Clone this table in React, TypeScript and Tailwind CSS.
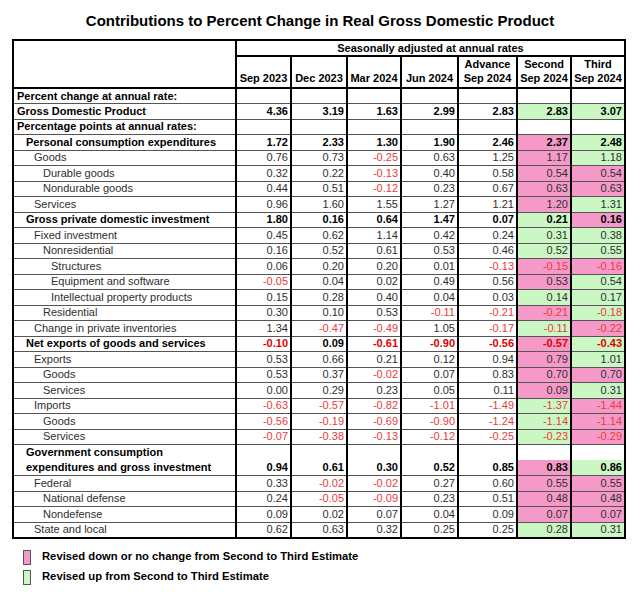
import React from 'react';

type Fill = 'p' | 'g' | '';

type Row = {
  label: string;
  level: number;
  bold?: boolean;
  values?: string[];
  fills?: [Fill, Fill];
  noLine?: boolean;
};

const rows: Row[] = [
  { label: 'Percent change at annual rate:', level: 0, bold: true },
  { label: 'Gross Domestic Product', level: 0, bold: true, values: ['4.36', '3.19', '1.63', '2.99', '2.83', '2.83', '3.07'], fills: ['g', 'g'] },
  { label: 'Percentage points at annual rates:', level: 0, bold: true },
  { label: 'Personal consumption expenditures', level: 1, bold: true, values: ['1.72', '2.33', '1.30', '1.90', '2.46', '2.37', '2.48'], fills: ['p', 'g'] },
  { label: 'Goods', level: 2, values: ['0.76', '0.73', '-0.25', '0.63', '1.25', '1.17', '1.18'], fills: ['p', 'g'] },
  { label: 'Durable goods', level: 3, values: ['0.32', '0.22', '-0.13', '0.40', '0.58', '0.54', '0.54'], fills: ['p', 'p'] },
  { label: 'Nondurable goods', level: 3, values: ['0.44', '0.51', '-0.12', '0.23', '0.67', '0.63', '0.63'], fills: ['p', 'p'] },
  { label: 'Services', level: 2, values: ['0.96', '1.60', '1.55', '1.27', '1.21', '1.20', '1.31'], fills: ['p', 'g'] },
  { label: 'Gross private domestic investment', level: 1, bold: true, values: ['1.80', '0.16', '0.64', '1.47', '0.07', '0.21', '0.16'], fills: ['g', 'p'] },
  { label: 'Fixed investment', level: 2, values: ['0.45', '0.62', '1.14', '0.42', '0.24', '0.31', '0.38'], fills: ['g', 'g'] },
  { label: 'Nonresidential', level: 3, values: ['0.16', '0.52', '0.61', '0.53', '0.46', '0.52', '0.55'], fills: ['g', 'g'] },
  { label: 'Structures', level: 4, values: ['0.06', '0.20', '0.20', '0.01', '-0.13', '-0.15', '-0.16'], fills: ['p', 'p'] },
  { label: 'Equipment and software', level: 4, values: ['-0.05', '0.04', '0.02', '0.49', '0.56', '0.53', '0.54'], fills: ['p', 'g'] },
  { label: 'Intellectual property products', level: 4, values: ['0.15', '0.28', '0.40', '0.04', '0.03', '0.14', '0.17'], fills: ['g', 'g'] },
  { label: 'Residential', level: 3, values: ['0.30', '0.10', '0.53', '-0.11', '-0.21', '-0.21', '-0.18'], fills: ['p', 'g'] },
  { label: 'Change in private inventories', level: 2, values: ['1.34', '-0.47', '-0.49', '1.05', '-0.17', '-0.11', '-0.22'], fills: ['g', 'p'] },
  { label: 'Net exports of goods and services', level: 1, bold: true, values: ['-0.10', '0.09', '-0.61', '-0.90', '-0.56', '-0.57', '-0.43'], fills: ['p', 'g'] },
  { label: 'Exports', level: 2, values: ['0.53', '0.66', '0.21', '0.12', '0.94', '0.79', '1.01'], fills: ['p', 'g'] },
  { label: 'Goods', level: 3, values: ['0.53', '0.37', '-0.02', '0.07', '0.83', '0.70', '0.70'], fills: ['p', 'p'] },
  { label: 'Services', level: 3, values: ['0.00', '0.29', '0.23', '0.05', '0.11', '0.09', '0.31'], fills: ['p', 'g'] },
  { label: 'Imports', level: 2, values: ['-0.63', '-0.57', '-0.82', '-1.01', '-1.49', '-1.37', '-1.44'], fills: ['g', 'p'] },
  { label: 'Goods', level: 3, values: ['-0.56', '-0.19', '-0.69', '-0.90', '-1.24', '-1.14', '-1.14'], fills: ['g', 'p'] },
  { label: 'Services', level: 3, values: ['-0.07', '-0.38', '-0.13', '-0.12', '-0.25', '-0.23', '-0.29'], fills: ['g', 'p'] },
  { label: 'Government consumption', level: 1, bold: true, noLine: true },
  { label: 'expenditures and gross investment', level: 1, bold: true, values: ['0.94', '0.61', '0.30', '0.52', '0.85', '0.83', '0.86'], fills: ['p', 'g'] },
  { label: 'Federal', level: 2, values: ['0.33', '-0.02', '-0.02', '0.27', '0.60', '0.55', '0.55'], fills: ['p', 'p'] },
  { label: 'National defense', level: 3, values: ['0.24', '-0.05', '-0.09', '0.23', '0.51', '0.48', '0.48'], fills: ['p', 'p'] },
  { label: 'Nondefense', level: 3, values: ['0.09', '0.02', '0.07', '0.04', '0.09', '0.07', '0.07'], fills: ['p', 'p'] },
  { label: 'State and local', level: 2, values: ['0.62', '0.63', '0.32', '0.25', '0.25', '0.28', '0.31'], fills: ['g', 'g'] },
];

const indent = ['pl-[3px]', 'pl-[12px]', 'pl-[20px]', 'pl-[29px]', 'pl-[37px]'];
const colWidths = ['w-[223px]', 'w-[55px]', 'w-[56px]', 'w-[54px]', 'w-[57px]', 'w-[59px]', 'w-[54px]', 'w-[54px]'];

const headers: [string, string][] = [
  ['', 'Sep 2023'],
  ['', 'Dec 2023'],
  ['', 'Mar 2024'],
  ['', 'Jun 2024'],
  ['Advance', 'Sep 2024'],
  ['Second', 'Sep 2024'],
  ['Third', 'Sep 2024'],
];

const fillClass = (f: Fill) => (f === 'p' ? 'bg-[#f59ac8]' : f === 'g' ? 'bg-[#cbf7c5]' : 'bg-white');

export default function App() {
  return (
    <div className="w-[640px] h-[597px] bg-white font-['Liberation_Sans',Arial,sans-serif] text-[11px] leading-none text-[#2e2e2e]">
      <h1 className="pt-[13px] pb-[11px] text-center text-[15px] font-bold text-black">
        Contributions to Percent Change in Real Gross Domestic Product
      </h1>
      <table className="ml-[12px] table-fixed border-collapse border-2 border-black">
        <colgroup>
          {colWidths.map((w, i) => (
            <col key={i} className={w} />
          ))}
        </colgroup>
        <thead>
          <tr className="h-[16px]">
            <th rowSpan={2} className="border-2 border-black" />
            <th colSpan={7} className="border-2 border-black text-center font-bold text-black">
              Seasonally adjusted at annual rates
            </th>
          </tr>
          <tr className="h-[31px]">
            {headers.map(([a, b], i) => (
              <th key={i} className="border-2 border-black px-[1px] pb-[2px] align-bottom text-center font-bold text-black leading-[14px]">
                {a && <div>{a}</div>}
                <div>{b}</div>
              </th>
            ))}
          </tr>
        </thead>
        <tbody>
          {rows.map((r, i) => (
            <tr key={i} className={`h-[15.5px] ${r.noLine ? '' : 'border-b border-[#555]'}`}>
              <td
                className={`${indent[r.level]} border-r-2 border-black whitespace-nowrap ${r.bold ? 'font-bold text-black' : ''}`}
              >
                {r.label}
              </td>
              {Array.from({ length: 7 }).map((_, j) => {
                const v = r.values?.[j];
                const fill: Fill = j >= 5 && r.fills ? r.fills[j - 5] : '';
                const neg = v?.startsWith('-');
                const color = neg ? (r.bold ? 'text-[#e00000]' : 'text-[#ea3a3a]') : r.bold ? 'text-black' : '';
                return (
                  <td
                    key={j}
                    className={`border-r-2 border-black pr-[2px] text-right ${fillClass(fill)} ${color} ${r.bold ? 'font-bold' : ''}`}
                  >
                    {v ?? ''}
                  </td>
                );
              })}
            </tr>
          ))}
        </tbody>
      </table>
      <div className="ml-[23px] mt-[11px] flex flex-col gap-[5px] font-bold text-black text-[11.25px]">
        <div className="flex items-center gap-[11px]">
          <span className="w-[8px] h-[15px] border border-[#555] bg-[#f59ac8]" />
          <span>Revised down or no change from Second to Third Estimate</span>
        </div>
        <div className="flex items-center gap-[11px]">
          <span className="w-[8px] h-[15px] border border-[#555] bg-[#cbf7c5]" />
          <span>Revised up from Second to Third Estimate</span>
        </div>
      </div>
    </div>
  );
}
